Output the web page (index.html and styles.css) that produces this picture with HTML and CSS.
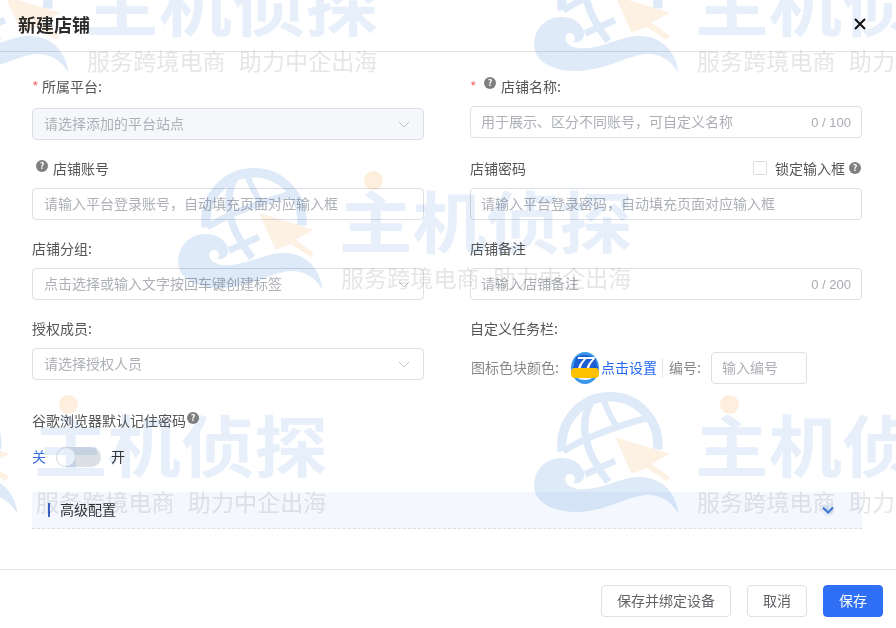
FILE: index.html
```html
<!DOCTYPE html>
<html lang="zh-CN">
<head>
<meta charset="utf-8">
<title>新建店铺</title>
<link rel="stylesheet" href="styles.css">
</head>
<body>
<svg class="defs" width="0" height="0" aria-hidden="true">
  <symbol id="wm-logo" viewBox="0 0 468 396">
    <g fill="none" stroke="#dfeaf8" stroke-linecap="butt">
      <path d="M97 178A144 144 0 1 1 383 172" stroke-width="28"/>
      <path d="M185 25Q125 130 235 270" stroke-width="22"/>
      <path d="M222 28Q238 70 262 108" stroke-width="18"/>
      <path d="M100 178Q180 125 350 78" stroke-width="20"/>
      <path d="M165 247L255 207" stroke-width="20"/>
    </g>
    <path fill="#dfeaf8" d="M445 365C440 300 390 250 320 255C270 258 220 290 160 292C125 293 100 275 107 255C112 240 135 245 135 262C135 270 128 272 128 272C150 280 170 260 160 235C145 200 95 190 60 205C25 220 5 260 15 300C30 345 90 362 150 360C230 355 280 320 340 310C390 303 425 330 445 365Z"/>
    <path fill="#fdf1e4" d="M255 135L420 185L365 215L420 255L410 268L350 228L305 245Z"/>
  </symbol>
</svg>

<div class="dialog">
  <header class="head">
    <h1 class="head-title">新建店铺</h1>
    <svg class="close" viewBox="0 0 12 12" width="12" height="12"><path d="M1 1L11 11M11 1L1 11" fill="none" stroke="#111" stroke-width="2"/></svg>
  </header>

  <main class="main">
    <div class="form">
      <div class="field">
        <div class="label label-wide"><span class="req">*</span>所属平台:</div>
        <div class="ctl ctl-disabled">
          <span class="ph">请选择添加的平台站点</span>
          <svg class="chev" viewBox="0 0 14 14" width="14" height="14"><path d="M2 5L7 10L12 5" fill="none" stroke="#c0c4cc"/></svg>
        </div>
      </div>
      <div class="field field-right">
        <div class="label"><span class="req req-wide">*</span><span class="help help-top">?</span>店铺名称:</div>
        <div class="ctl">
          <input class="inp" type="text" placeholder="用于展示、区分不同账号，可自定义名称">
          <span class="count">0 / 100</span>
        </div>
      </div>

      <div class="field">
        <div class="label"><span class="help help-lead">?</span>店铺账号</div>
        <div class="ctl"><input class="inp" type="text" placeholder="请输入平台登录账号，自动填充页面对应输入框"></div>
      </div>
      <div class="field field-right">
        <div class="label label-split">
          <span>店铺密码</span>
          <span class="lock"><span class="check"></span>锁定输入框<span class="help help-lock">?</span></span>
        </div>
        <div class="ctl"><input class="inp" type="text" placeholder="请输入平台登录密码，自动填充页面对应输入框"></div>
      </div>

      <div class="field">
        <div class="label">店铺分组:</div>
        <div class="ctl">
          <span class="ph">点击选择或输入文字按回车键创建标签</span>
          <svg class="chev" viewBox="0 0 14 14" width="14" height="14"><path d="M2 5L7 10L12 5" fill="none" stroke="#c0c4cc"/></svg>
        </div>
      </div>
      <div class="field field-right">
        <div class="label">店铺备注</div>
        <div class="ctl">
          <input class="inp" type="text" placeholder="请输入店铺备注">
          <span class="count">0 / 200</span>
        </div>
      </div>

      <div class="field">
        <div class="label">授权成员:</div>
        <div class="ctl">
          <span class="ph">请选择授权人员</span>
          <svg class="chev" viewBox="0 0 14 14" width="14" height="14"><path d="M2 5L7 10L12 5" fill="none" stroke="#c0c4cc"/></svg>
        </div>
      </div>
      <div class="field field-right">
        <div class="label label-task">自定义任务栏:</div>
        <div class="task">
          <span class="task-label">图标色块颜色:</span>
          <svg class="task-logo" viewBox="0 0 28 32" width="28" height="32">
            <ellipse cx="14" cy="16" rx="14" ry="16" fill="#3a97ea"/>
            <ellipse cx="14" cy="20" rx="11" ry="8" fill="#fff"/>
            <path d="M5 5Q14 0 24 6L27 16H2Z" fill="#1c5fd2"/>
            <text class="logo-num" x="14" y="17" text-anchor="middle">77</text>
            <rect x="0" y="16" width="28" height="10" rx="4" fill="#fdc100"/>
          </svg>
          <a class="task-link">点击设置</a>
          <span class="task-sep"></span>
          <span class="task-num">编号:</span>
          <div class="ctl ctl-num"><input class="inp" type="text" placeholder="输入编号"></div>
        </div>
      </div>
    </div>

    <div class="remember">
      <div class="label">谷歌浏览器默认记住密码<span class="help help-tail">?</span></div>
      <div class="switch-row">
        <span class="sw-off">关</span>
        <span class="switch"><span class="knob"></span></span>
        <span class="sw-on">开</span>
      </div>
    </div>

    <div class="advanced">
      <span class="adv-bar"></span>
      <span class="adv-text">高级配置</span>
      <span class="adv-icon">
        <svg viewBox="0 0 14 14" width="14" height="14"><path d="M2 4.500L7 9.500L12 4.500" fill="none" stroke="#3f78d6" stroke-width="2"/></svg>
      </span>
    </div>
  </main>

  <footer class="foot">
    <button class="btn btn-bind">保存并绑定设备</button>
    <button class="btn btn-cancel">取消</button>
    <button class="btn btn-save">保存</button>
  </footer>

  <div class="watermarks" aria-hidden="true">
    <div class="wm wm-a"><svg class="wm-img"><use href="#wm-logo"/></svg><span class="wm-dot"></span><span class="wm-title">主机侦探</span><span class="wm-sub">服务跨境电商 助力中企出海</span></div>
    <div class="wm wm-b"><svg class="wm-img"><use href="#wm-logo"/></svg><span class="wm-dot"></span><span class="wm-title">主机侦探</span><span class="wm-sub">服务跨境电商 助力中企出海</span></div>
    <div class="wm wm-c"><svg class="wm-img"><use href="#wm-logo"/></svg><span class="wm-dot"></span><span class="wm-title">主机侦探</span><span class="wm-sub">服务跨境电商 助力中企出海</span></div>
    <div class="wm wm-d"><svg class="wm-img"><use href="#wm-logo"/></svg><span class="wm-dot"></span><span class="wm-title">主机侦探</span><span class="wm-sub">服务跨境电商 助力中企出海</span></div>
    <div class="wm wm-e"><svg class="wm-img"><use href="#wm-logo"/></svg><span class="wm-dot"></span><span class="wm-title">主机侦探</span><span class="wm-sub">服务跨境电商 助力中企出海</span></div>
  </div>
</div>
</body>
</html>
```
FILE: styles.css
```css
* { box-sizing: border-box; }
html, body { margin: 0; height: 100%; }
body {
  background: #fff;
  font-family: "Noto Sans CJK SC", "Noto Sans", sans-serif;
  font-size: 14px;
  color: #555;
}
.defs { position: absolute; }

.dialog {
  position: relative;
  width: 896px;
  height: 628px;
  overflow: hidden;
  display: flex;
  flex-direction: column;
}

/* header */
.head {
  height: 52px;
  flex: none;
  display: flex;
  align-items: center;
  justify-content: space-between;
  padding: 0 30px 4px 18px;
  border-bottom: 1px solid #e4e4e4;
}
.head-title { margin: 0; font-size: 18px; line-height: 24px; font-weight: 700; color: #2b2b2b; }
.close { display: block; margin-top: 1px; }

/* body */
.main { flex: 1; padding: 25px 34px 0 32px; }
.form { display: grid; grid-template-columns: 392px 392px; column-gap: 46px; row-gap: 19px; align-items: start; }
.label {
  display: flex;
  align-items: center;
  height: 20px;
  padding-bottom: 2px;
  line-height: 18px;
  margin-bottom: 9px;
  color: #555;
}
.label-wide { margin-bottom: 11px; }
.label-task { margin-bottom: 13px; }
.label-split { justify-content: space-between; }
.req { width: 10px; color: #f56c6c; }
.req-wide { width: 14px; }
.help {
  flex: none;
  width: 12px;
  height: 12px;
  border-radius: 50%;
  background: #808080;
  color: #fff;
  font-size: 9px;
  line-height: 12px;
  font-weight: 700;
  text-align: center;
}
.help-top { align-self: flex-start; margin: 0 5px 0 0; }
.help-lead { align-self: flex-start; margin: 1px 5px 0 4px; }
.help-lock { margin-left: 4px; }
.help-tail { align-self: flex-start; margin: 1px 0 0 1px; }

.lock { display: flex; align-items: center; margin-right: 1px; }
.check { width: 14px; height: 14px; margin-right: 8px; border: 1px solid #dcdfe6; border-radius: 2px; background: #fff; }

.ctl {
  display: flex;
  align-items: center;
  height: 32px;
  padding: 0 12px 0 11px;
  border: 1px solid #dcdfe6;
  border-radius: 4px;
  background: #fff;
}
.field-right .ctl { padding-left: 10px; }
.ctl-disabled { background: #f5f7fa; }
.ph { flex: 1; margin-bottom: 2px; color: #adb0b6; white-space: nowrap; }
.chev { flex: none; }
.inp {
  flex: 1;
  min-width: 0;
  height: 100%;
  padding: 0 0 2px;
  border: 0;
  outline: 0;
  background: transparent;
  font: inherit;
  color: #555;
}
.inp::placeholder { color: #adb0b6; opacity: 1; }
.count { flex: none; margin-right: -2px; font-family: "Liberation Sans", Arial, sans-serif; font-size: 13px; color: #a8abb2; }

/* task row */
.task { display: flex; align-items: center; height: 32px; padding-left: 1px; }
.task-label { width: 100px; margin-bottom: 2px; color: #888; }
.task-logo { flex: none; display: block; }
.logo-num { font-family: "Liberation Sans", Arial, sans-serif; font-size: 17px; font-weight: 700; font-style: italic; letter-spacing: -1px; fill: #fff; }
.task-link { margin: 0 0 2px 2px; color: #2468f2; white-space: nowrap; }
.task-sep { width: 1px; height: 20px; margin: 0 6px 0 5px; background: #e4e4e4; }
.task-num { width: 42px; margin-bottom: 2px; color: #888; }
.field-right .ctl-num { width: 96px; padding: 0 10px; }

/* remember + switch */
.remember { margin-top: 27px; }
.remember .label { margin-bottom: 16px; }
.switch-row { display: flex; align-items: center; height: 20px; }
.sw-off { margin-bottom: 2px; color: #3a6fe0; }
.switch { position: relative; width: 45px; height: 20px; margin: 0 10px; border-radius: 10px; background: #dcdfe6; }
.knob { position: absolute; left: 0; top: 0; width: 20px; height: 20px; border: 1px solid #dcdfe6; border-radius: 50%; background: #fff; }
.sw-on { margin-bottom: 2px; color: #333; }

/* advanced bar */
.advanced {
  display: flex;
  align-items: center;
  height: 37px;
  margin-top: 25px;
  padding: 0 27px 0 16px;
  background: #f4f8fe;
  border-bottom: 1px dashed #dcdfe6;
}
.adv-bar { width: 2px; height: 14px; background: #3a64c8; }
.adv-text { flex: 1; margin: 0 0 2px 10px; color: #333; }
.adv-icon { display: flex; border-radius: 50%; background: radial-gradient(circle, #cfe0f7 0, #e6effb 55%, transparent 75%); }
.adv-icon svg { display: block; }

/* footer */
.foot {
  flex: none;
  height: 59px;
  display: flex;
  justify-content: flex-end;
  gap: 16px;
  padding: 15px 13px 0 0;
  border-top: 1px solid #e6e6e6;
}
.btn {
  height: 32px;
  padding: 0 0 2px;
  border: 1px solid #dcdfe6;
  border-radius: 4px;
  background: #fff;
  font: inherit;
  color: #606266;
}
.btn-bind { width: 130px; }
.btn-cancel { width: 60px; }
.btn-save { width: 60px; background: #2e6ff6; border-color: #2e6ff6; color: #fff; }

/* watermark layer over the whole dialog */
.watermarks { position: absolute; inset: 0; pointer-events: none; mix-blend-mode: multiply; }
.wm { position: absolute; width: 456px; height: 132px; }
.wm-a { left: -80px; top: -49px; }
.wm-b { left: 530px; top: -49px; }
.wm-c { left: 174px; top: 168px; }
.wm-d { left: -131px; top: 392px; }
.wm-e { left: 530px; top: 392px; }
.wm-img { position: absolute; left: 0; top: 0; width: 156px; height: 132px; }
.wm-dot { position: absolute; left: 190px; top: 3px; width: 19px; height: 19px; border-radius: 50%; background: #fdeedd; }
.wm-title {
  position: absolute;
  left: 165px;
  top: 10px;
  font-size: 72px;
  line-height: 86px;
  font-weight: 700;
  color: #e6effa;
  white-space: nowrap;
  transform: scale(1.02, .93);
  transform-origin: 0 20px;
}
.wm-sub {
  position: absolute;
  left: 167px;
  top: 94px;
  font-size: 23px;
  line-height: 30px;
  word-spacing: 8px;
  letter-spacing: .1px;
  color: #e6e6e6;
  white-space: pre;
}
```
